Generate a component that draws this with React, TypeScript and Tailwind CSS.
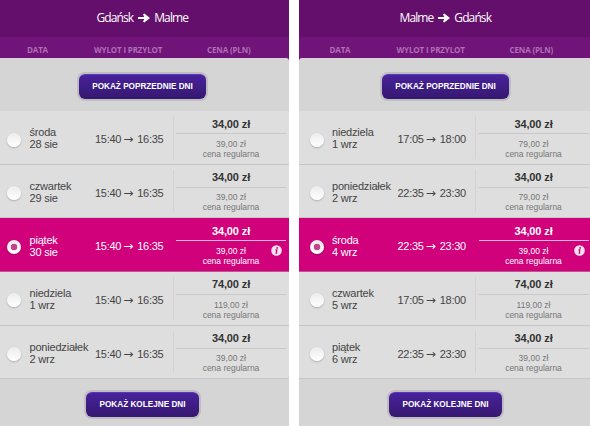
import React, { useState } from 'react';

interface Flight {
  day: string;
  date: string;
  from: string;
  to: string;
  price: string;
  regular: string;
}

interface FlightPanelProps {
  origin: string;
  destination: string;
  flights: Flight[];
  side: 'left' | 'right';
}

const outbound: Flight[] = [
  { day: 'środa', date: '28 sie', from: '15:40', to: '16:35', price: '34,00 zł', regular: '39,00 zł' },
  { day: 'czwartek', date: '29 sie', from: '15:40', to: '16:35', price: '34,00 zł', regular: '39,00 zł' },
  { day: 'piątek', date: '30 sie', from: '15:40', to: '16:35', price: '34,00 zł', regular: '39,00 zł' },
  { day: 'niedziela', date: '1 wrz', from: '15:40', to: '16:35', price: '74,00 zł', regular: '119,00 zł' },
  { day: 'poniedziałek', date: '2 wrz', from: '15:40', to: '16:35', price: '34,00 zł', regular: '39,00 zł' },
];

const inbound: Flight[] = [
  { day: 'niedziela', date: '1 wrz', from: '17:05', to: '18:00', price: '34,00 zł', regular: '79,00 zł' },
  { day: 'poniedziałek', date: '2 wrz', from: '22:35', to: '23:30', price: '34,00 zł', regular: '79,00 zł' },
  { day: 'środa', date: '4 wrz', from: '22:35', to: '23:30', price: '34,00 zł', regular: '39,00 zł' },
  { day: 'czwartek', date: '5 wrz', from: '17:05', to: '18:00', price: '74,00 zł', regular: '119,00 zł' },
  { day: 'piątek', date: '6 wrz', from: '22:35', to: '23:30', price: '34,00 zł', regular: '39,00 zł' },
];

function Radio({ checked }: { checked: boolean }) {
  return (
    <span className="flex h-[14px] w-[14px] items-center justify-center rounded-full bg-linear-to-b from-[#ececec] to-white shadow-[0_1px_2px_rgba(0,0,0,0.22)]">
      {checked && <span className="h-[6px] w-[6px] rounded-full bg-[#c9408c] shadow-[0_0_1px_#7d2a55]" />}
    </span>
  );
}

function DaysButton({ label, className }: { label: string; className: string }) {
  return (
    <button
      className={`flex h-[25px] items-center justify-center rounded-[6px] border-t border-[#5a35c0] bg-linear-to-b from-[#48229c] to-[#35186f] text-[8.2px] font-bold whitespace-nowrap text-white shadow-[0_0_0_2px_#bfbdc2] ${className}`}
    >
      {label}
    </button>
  );
}

function FlightRow({
  flight,
  selected,
  inset,
  onSelect,
}: {
  flight: Flight;
  selected: boolean;
  inset: string;
  onSelect: () => void;
}) {
  return (
    <div
      onClick={onSelect}
      className={`flex h-[53.67px] cursor-pointer border-b ${inset} ${
        selected ? 'border-[#b9598f] bg-[#d1007b] text-white' : 'border-[#c6c6c6] bg-[#dedede] text-[#444]'
      }`}
    >
      <div className="w-[29.5px] pt-[21.5px] pl-[7px]">
        <Radio checked={selected} />
      </div>
      <div className="w-[65.5px] pt-[15.3px] text-[11px] leading-[12px] tracking-[-0.2px] whitespace-nowrap">
        <div>{flight.day}</div>
        <div>{flight.date}</div>
      </div>
      <div className="flex w-[77.5px] pt-[22px] text-[11px] leading-[12px] tracking-[-0.3px] whitespace-nowrap">
        <span className="w-[28.3px]">{flight.from}</span>
        <span className="w-[14px] font-['DejaVu_Sans'] text-[12px]">→</span>
        <span>{flight.to}</span>
      </div>
      <div className={`my-[5px] w-px ${selected ? '' : 'bg-[#d3d3d3]'}`} />
      <div className="relative ml-[2.5px] w-[110px] text-center">
        <div
          className={`h-[23px] border-b pt-[6.5px] text-[11px] leading-[12px] font-bold tracking-[-0.12px] ${
            selected ? 'border-[#f3b5d8]' : 'border-[#c8c8c8] text-[#333]'
          }`}
        >
          {flight.price}
        </div>
        <div className={`pt-[4.6px] text-[8.5px] leading-[10px] ${selected ? '' : 'text-[#777]'}`}>
          <div>{flight.regular}</div>
          <div>cena regularna</div>
        </div>
        {selected && (
          <svg className="absolute top-[27px] right-[4px] h-[11px] w-[11px]" viewBox="0 0 11 11">
            <circle cx="5.5" cy="5.5" r="5.3" fill="#fbe3f0" />
            <circle cx="6.1" cy="2.9" r="0.9" fill="#d1007b" />
            <path d="M4.4 4.8h1.5l-.7 3.4h1" fill="none" stroke="#d1007b" strokeWidth="1.2" />
          </svg>
        )}
      </div>
    </div>
  );
}

function FlightPanel({ origin, destination, flights, side }: FlightPanelProps) {
  const [selected, setSelected] = useState(2);
  const inset = side === 'left' ? '' : 'pl-[3.5px]';

  return (
    <section className={`flex h-full flex-col bg-[#701479] ${side === 'left' ? 'w-[289px]' : 'w-[291px]'}`}>
      <header className="flex h-[37px] items-center bg-[#650f6c]">
        <h2
          className={`flex items-center gap-[4.5px] pb-px font-['Open_Sans'] text-[12px] tracking-[-0.9px] text-white ${
            side === 'left' ? 'pl-[96.5px]' : 'pl-[100.5px]'
          }`}
        >
          {origin}
          <svg className="h-[10px] w-[12px]" viewBox="0 0 12 10">
            <path d="M0 4h6.3L5 1.6 6.3.4 12 5 6.3 9.6 5 8.4 6.3 6H0z" fill="white" />
          </svg>
          {destination}
        </h2>
      </header>
      <div
        className={`flex h-[21px] items-center pt-[4px] font-['Open_Sans'] text-[8px] font-bold tracking-[-0.15px] whitespace-nowrap text-[#ae6fb5] ${inset}`}
      >
        <span className="w-[67px] pl-[27px]">DATA</span>
        <span className="w-[113px] pl-[27px]">WYLOT I PRZYLOT</span>
        <span className="pl-[27px]">CENA (PLN)</span>
      </div>
      <div className={`flex-1 bg-[#d5d5d5] ${side === 'left' ? 'rounded-tr-[3px]' : 'rounded-tl-[3px]'}`}>
        <div className={`h-[53px] pt-[16px] ${side === 'left' ? 'pl-[79px]' : 'pl-[83px]'}`}>
          <DaysButton label="POKAŻ POPRZEDNIE DNI" className="w-[127px]" />
        </div>
        {flights.map((flight, idx) => (
          <FlightRow
            key={idx}
            flight={flight}
            selected={idx === selected}
            inset={inset}
            onSelect={() => setSelected(idx)}
          />
        ))}
        <div className={`pt-[13px] ${side === 'left' ? 'pl-[86px]' : 'pl-[90px]'}`}>
          <DaysButton label="POKAŻ KOLEJNE DNI" className="w-[113px]" />
        </div>
      </div>
    </section>
  );
}

function App() {
  return (
    <main className="flex h-[426px] w-[590px] gap-[10px] overflow-hidden bg-white font-['Liberation_Sans',Arial,sans-serif]">
      <FlightPanel origin="Gdańsk" destination="Malme" flights={outbound} side="left" />
      <FlightPanel origin="Malme" destination="Gdańsk" flights={inbound} side="right" />
    </main>
  );
}

export default App;
